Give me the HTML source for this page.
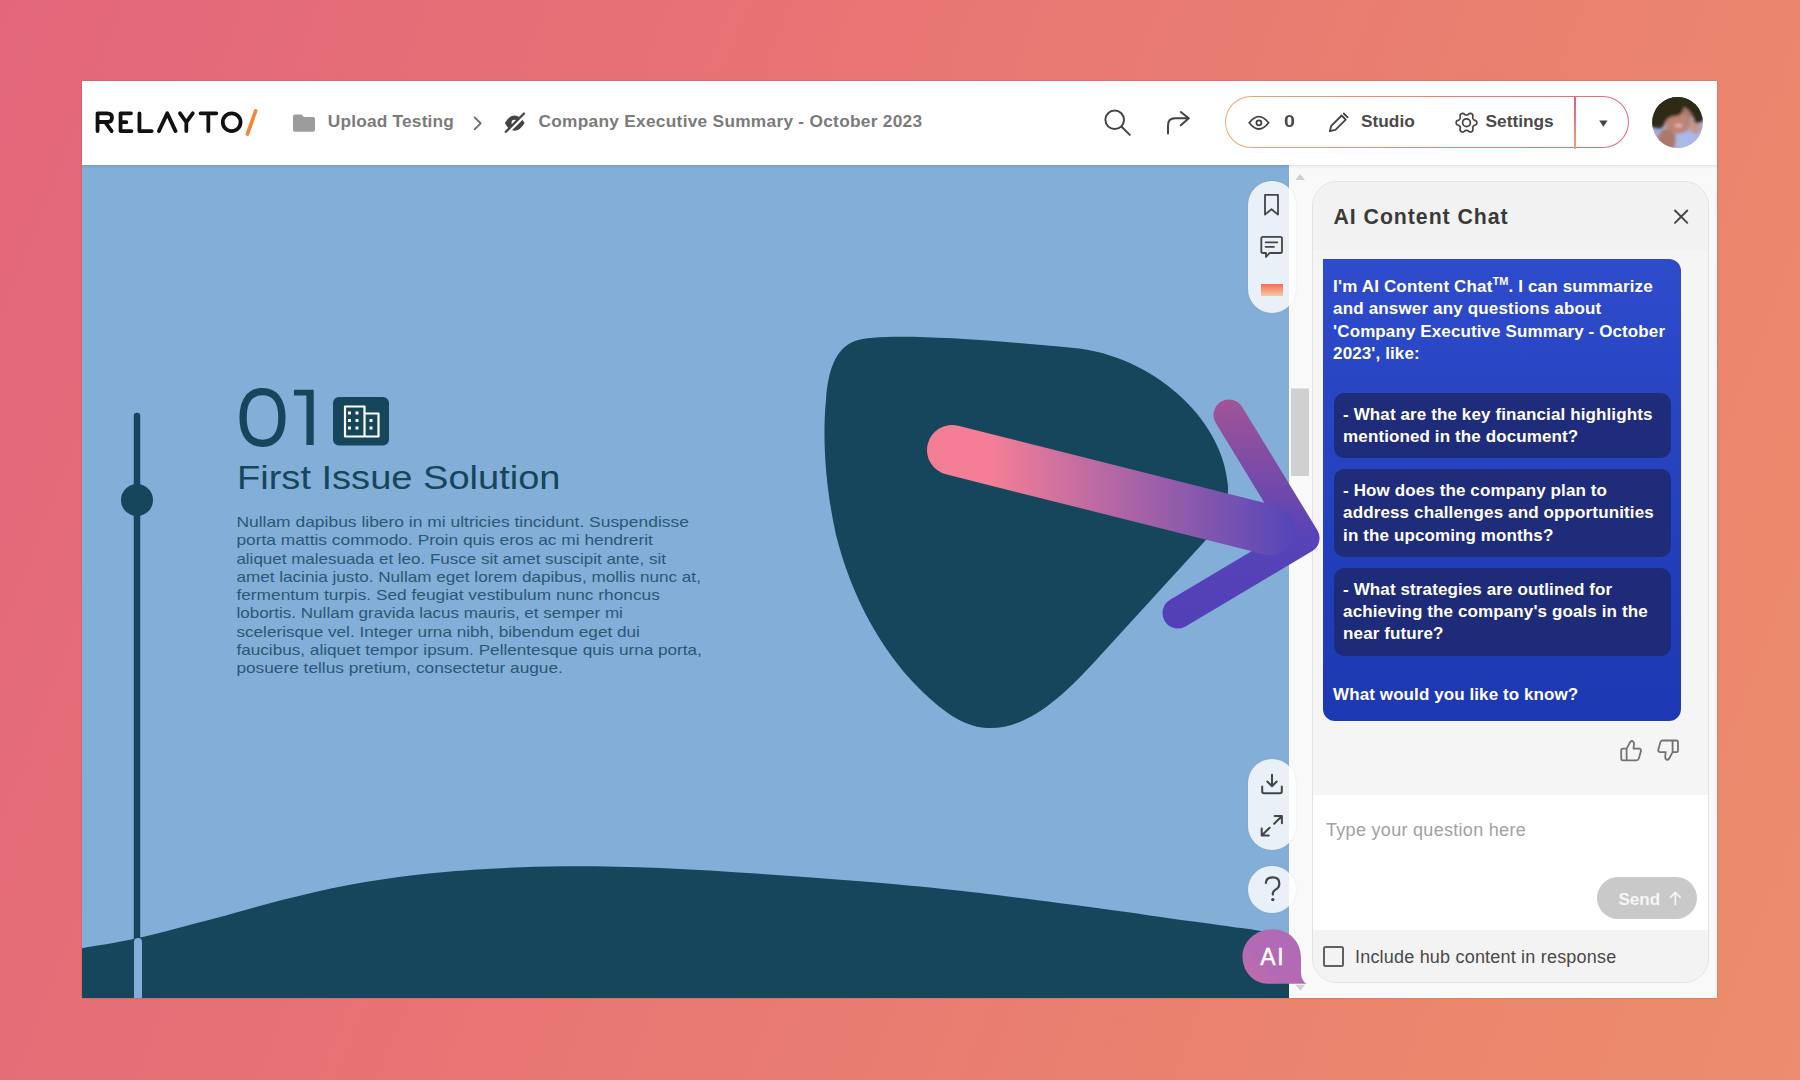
<!DOCTYPE html>
<html><head><meta charset="utf-8">
<style>
*{margin:0;padding:0;box-sizing:border-box}
html,body{width:1800px;height:1080px;overflow:hidden}
body{position:relative;background:linear-gradient(111deg,#E3667A,#ED8D6B);font-family:"Liberation Sans",sans-serif}
.a{position:absolute}
.t{position:absolute;white-space:nowrap;line-height:1}
#hdr{position:absolute;left:82px;top:81px;width:1635px;height:84px;background:#fff}
#rcol{position:absolute;left:1289px;top:165px;width:428px;height:833px;background:#F9F9F9}
#panel{position:absolute;left:1312px;top:181px;width:397px;height:802px;border:1px solid #E2E2E2;border-radius:25px;background:#F4F4F4;overflow:hidden}
</style></head><body>
<div class="a" style="left:82px;top:81px;width:1635px;height:917px;box-shadow:0 0 1.5px rgba(120,20,40,0.35)"></div>
<svg class="a" style="left:0;top:0" width="1800" height="1080" viewBox="0 0 1800 1080">
<defs><clipPath id="sc"><rect x="82" y="165" width="1207" height="833"/></clipPath></defs>
<g clip-path="url(#sc)">
<rect x="82" y="165" width="1207" height="833" fill="#83AED8"/>
<path d="M855,341 C878,333 960,337 1074,348 C1150,355 1223,417 1228,486 C1229,510 1218,527 1204,542 L1098,658 C1060,700 1025,730 987,728 C960,727 935,705 911,680 C875,640 850,590 836,535 C826,490 822,440 826,400 C828,371 835,348.5 855,341Z" fill="#16465C"/>
<line x1="137" y1="416" x2="137" y2="945" stroke="#16465C" stroke-width="6.5" stroke-linecap="round"/>
<circle cx="137" cy="500" r="16" fill="#16465C"/>
<path d="M60.0,953.0 C63.7,952.2 69.2,950.8 82.0,948.3 C94.8,945.8 114.8,943.3 137.0,938.3 C159.2,933.3 191.1,924.7 215.3,918.3 C239.5,911.9 259.8,905.5 282.0,900.0 C304.2,894.5 326.5,889.2 348.7,885.0 C370.9,880.8 393.1,877.6 415.3,875.0 C437.5,872.4 457.1,870.8 482.0,869.3 C506.9,867.8 535.3,866.4 565.0,866.2 C594.7,866.0 627.5,866.7 660.0,868.0 C692.5,869.3 726.7,871.6 760.0,873.8 C793.3,876.0 826.7,878.4 860.0,881.2 C893.3,884.0 920.5,886.3 960.0,890.8 C999.5,895.2 1057.8,902.8 1096.7,907.9 C1135.6,913.0 1166.5,917.9 1193.3,921.6 C1220.1,925.4 1238.3,927.8 1257.8,930.4 C1277.2,933.0 1301.3,936.3 1310.0,937.5 L1310,1000 L60,1000Z" fill="#16465C"/>
<line x1="138" y1="942" x2="138" y2="1010" stroke="#83AED8" stroke-width="8" stroke-linecap="round"/>
<rect x="333" y="397" width="56" height="48.5" rx="6" fill="#16465C"/>
<g fill="none" stroke="#fff" stroke-width="2.2" stroke-linejoin="round">
<path d="M345,436.5 V406.5 H364.5 V436.5 Z M364.5,413.5 H378.5 V436.5 H364.5"/>
</g>
<g fill="#fff">
<rect x="348" y="411.5" width="3" height="3"/><rect x="355.5" y="411.5" width="3" height="3"/>
<rect x="348" y="419" width="3" height="3"/><rect x="355.5" y="419" width="3" height="3"/>
<rect x="348" y="426.5" width="3" height="3"/><rect x="355.5" y="426.5" width="3" height="3"/>
<rect x="369.5" y="419" width="3" height="3"/><rect x="369.5" y="426.5" width="3" height="3"/>
</g>
<path d="M262.5,391.7 C274.92,391.7 281.9,400.99 281.9,417.5 C281.9,434.01 274.92,443.3 262.5,443.3 C250.08,443.3 243.1,434.01 243.1,417.5 C243.1,400.99 250.08,391.7 262.5,391.7Z" fill="none" stroke="#16465C" stroke-width="7.3"/>
<path d="M293.9,389.7 H313.7 V444.9 H306.4 V395.6 H293.9 Z" fill="#16465C"/>
<text x="237" y="488.7" font-size="33.5" fill="#16465C" font-family="Liberation Sans" textLength="323.5" lengthAdjust="spacingAndGlyphs">First Issue Solution</text>
<g font-size="14.6" fill="#2A5874" font-family="Liberation Sans">
<text x="236.4" y="527" textLength="452.5" lengthAdjust="spacingAndGlyphs">Nullam dapibus libero in mi ultricies tincidunt. Suspendisse</text>
<text x="236.4" y="545.25" textLength="416.5" lengthAdjust="spacingAndGlyphs">porta mattis commodo. Proin quis eros ac mi hendrerit</text>
<text x="236.4" y="563.5" textLength="429.5" lengthAdjust="spacingAndGlyphs">aliquet malesuada et leo. Fusce sit amet suscipit ante, sit</text>
<text x="236.4" y="581.75" textLength="464.5" lengthAdjust="spacingAndGlyphs">amet lacinia justo. Nullam eget lorem dapibus, mollis nunc at,</text>
<text x="236.4" y="600" textLength="423.5" lengthAdjust="spacingAndGlyphs">fermentum turpis. Sed feugiat vestibulum nunc rhoncus</text>
<text x="236.4" y="618.25" textLength="386.5" lengthAdjust="spacingAndGlyphs">lobortis. Nullam gravida lacus mauris, et semper mi</text>
<text x="236.4" y="636.5" textLength="403.5" lengthAdjust="spacingAndGlyphs">scelerisque vel. Integer urna nibh, bibendum eget dui</text>
<text x="236.4" y="654.75" textLength="465.5" lengthAdjust="spacingAndGlyphs">faucibus, aliquet tempor ipsum. Pellentesque quis urna porta,</text>
<text x="236.4" y="673" textLength="326.5" lengthAdjust="spacingAndGlyphs">posuere tellus pretium, consectetur augue.</text>
</g>
</g>
</svg>
<div id="hdr"></div>

<svg class="a" style="left:85px;top:95px" width="200" height="55" viewBox="0 0 1800 495">
<g fill="none" stroke="#111" stroke-width="34" stroke-linecap="round" stroke-linejoin="round">
<path d="M113,325 V165 H198 Q243,165 243,204 Q243,243 198,243 H113 M180,243 L240,325"/>
<path d="M414,165 H320 V325 H418 M320,245 H372"/>
<path d="M490,165 V325 H600"/>
<path d="M665,325 L740,165 L815,325"/>
<path d="M855,165 L912,245 L970,165 M912,245 V325"/>
<path d="M1040,165 H1182 M1110,165 V325"/>
<ellipse cx="1320" cy="245" rx="80" ry="80"/>
</g>
<path d="M1536,143 L1462,352" stroke="#F08A3A" stroke-width="33" stroke-linecap="round"/>
</svg>
<svg class="a" style="left:0;top:0" width="1800" height="170" viewBox="0 0 1800 170">
<path d="M293,116.5 a2,2 0 0 1 2,-2 h6.5 l2.5,2.5 h9 a2,2 0 0 1 2,2 v10.8 a2,2 0 0 1 -2,2 h-18 a2,2 0 0 1 -2,-2 z" fill="#9C9C9C"/>
<polyline points="474.6,117.4 480.6,123.3 474.6,129.3" fill="none" stroke="#6E6E6E" stroke-width="1.9" stroke-linecap="round" stroke-linejoin="round"/>
<path d="M504.8,123 Q509,115.5 514.5,115.5 Q520,115.5 524.6,123 Q520,130.8 514.5,130.8 Q509,130.8 504.8,123Z" fill="#444"/>
<circle cx="514.5" cy="122.8" r="3" fill="#fff"/>
<line x1="506" y1="134" x2="526" y2="114" stroke="#fff" stroke-width="3.2"/>
<line x1="505.8" y1="131.8" x2="524" y2="113.5" stroke="#444" stroke-width="2.3" stroke-linecap="round"/>
<g fill="none" stroke="#444" stroke-width="2" stroke-linecap="round" stroke-linejoin="round">
<circle cx="1114.7" cy="119.8" r="9.3"/>
<line x1="1121.6" y1="126.7" x2="1129.8" y2="134.9"/>
<path d="M1168,133.5 V125.5 Q1168,118.3 1175,118.3 H1188.5 M1180.8,112 L1188.8,118.3 L1180.8,125.3"/>
</g>
</svg>
<div class="t" style="left:327.8px;top:113px;font-size:17.3px;font-weight:700;color:#7B7B7B;letter-spacing:0.2px">Upload Testing</div>
<div class="t" style="left:538.5px;top:113px;font-size:17.3px;font-weight:700;color:#7B7B7B;letter-spacing:0.28px">Company Executive Summary - October 2023</div>
<div class="a" style="left:1225.3px;top:96.2px;width:404px;height:52.3px;border-radius:26.2px;background:linear-gradient(82deg,#F4A874 0%,#EF8576 45%,#EB6580 100%)"></div>
<div class="a" style="left:1226.3px;top:97.2px;width:402px;height:50.3px;border-radius:25.2px;background:#fff"></div>
<div class="a" style="left:1574.3px;top:96.5px;width:2px;height:52px;background:linear-gradient(#E85A7C,#F2A26C)"></div>
<svg class="a" style="left:0;top:0" width="1800" height="170" viewBox="0 0 1800 170">
<g fill="none" stroke="#444" stroke-width="1.8" stroke-linecap="round" stroke-linejoin="round">
<path d="M1249.2,122.8 Q1254,116.6 1258.9,116.6 Q1263.8,116.6 1268.6,122.8 Q1263.8,129 1258.9,129 Q1254,129 1249.2,122.8Z"/>
<circle cx="1258.9" cy="122.8" r="2.5"/>
<path d="M1329.8,131.2 L1331.3,125.8 L1341.6,115.5 L1345.7,119.6 L1335.4,129.9 Z"/>
<line x1="1343.8" y1="113.5" x2="1347.6" y2="117.3"/>
</g>
<path d="M1476.85,122.70 L1476.80,123.24 L1476.63,123.77 L1476.36,124.26 L1475.96,124.71 L1475.19,125.03 L1474.42,125.27 L1473.99,125.57 L1473.64,125.88 L1473.35,126.19 L1473.13,126.53 L1472.95,126.89 L1472.82,127.29 L1472.73,127.75 L1472.69,128.28 L1472.86,129.06 L1472.97,129.88 L1472.78,130.46 L1472.49,130.94 L1472.12,131.35 L1471.67,131.66 L1471.18,131.89 L1470.64,132.01 L1470.08,132.02 L1469.49,131.89 L1468.83,131.39 L1468.23,130.85 L1467.75,130.62 L1467.32,130.47 L1466.90,130.38 L1466.50,130.35 L1466.10,130.38 L1465.68,130.47 L1465.25,130.62 L1464.77,130.85 L1464.17,131.39 L1463.51,131.89 L1462.92,132.02 L1462.36,132.01 L1461.82,131.89 L1461.33,131.66 L1460.88,131.35 L1460.51,130.94 L1460.22,130.46 L1460.03,129.88 L1460.14,129.06 L1460.31,128.28 L1460.27,127.75 L1460.18,127.29 L1460.05,126.89 L1459.87,126.53 L1459.65,126.19 L1459.36,125.88 L1459.01,125.57 L1458.58,125.27 L1457.81,125.03 L1457.04,124.71 L1456.64,124.26 L1456.37,123.77 L1456.20,123.24 L1456.15,122.70 L1456.20,122.16 L1456.37,121.63 L1456.64,121.14 L1457.04,120.69 L1457.81,120.37 L1458.58,120.13 L1459.01,119.83 L1459.36,119.52 L1459.65,119.21 L1459.87,118.88 L1460.05,118.51 L1460.18,118.11 L1460.27,117.65 L1460.31,117.12 L1460.14,116.34 L1460.03,115.52 L1460.22,114.94 L1460.51,114.46 L1460.88,114.05 L1461.33,113.74 L1461.82,113.51 L1462.36,113.39 L1462.92,113.38 L1463.51,113.51 L1464.17,114.01 L1464.77,114.55 L1465.25,114.78 L1465.68,114.93 L1466.10,115.02 L1466.50,115.05 L1466.90,115.02 L1467.32,114.93 L1467.75,114.78 L1468.23,114.55 L1468.83,114.01 L1469.49,113.51 L1470.08,113.38 L1470.64,113.39 L1471.18,113.51 L1471.67,113.74 L1472.12,114.05 L1472.49,114.46 L1472.78,114.94 L1472.97,115.52 L1472.86,116.34 L1472.69,117.12 L1472.73,117.65 L1472.82,118.11 L1472.95,118.51 L1473.13,118.88 L1473.35,119.21 L1473.64,119.52 L1473.99,119.83 L1474.42,120.13 L1475.19,120.37 L1475.96,120.69 L1476.36,121.14 L1476.63,121.63 L1476.80,122.16Z" fill="none" stroke="#444" stroke-width="1.7" stroke-linejoin="round"/>
<circle cx="1466.5" cy="122.7" r="3.9" fill="none" stroke="#444" stroke-width="1.7"/>
<path d="M1599.2,120.6 H1607.6 L1603.4,126.8Z" fill="#444"/>
</svg>
<div class="t" style="left:1283.6px;top:113.2px;font-size:17.3px;font-weight:700;color:#4A4A4A;transform:scaleX(1.14);transform-origin:0 0">0</div>
<div class="t" style="left:1361px;top:113.2px;font-size:17.3px;font-weight:700;color:#4A4A4A">Studio</div>
<div class="t" style="left:1485.5px;top:113px;font-size:17.3px;font-weight:700;color:#4A4A4A">Settings</div>
<svg class="a" style="left:1651.9px;top:96.9px" width="51" height="51" viewBox="0 0 51 51">
<defs><clipPath id="av"><circle cx="25.5" cy="25.5" r="25.4"/></clipPath>
<filter id="bl" x="-20%" y="-20%" width="140%" height="140%"><feGaussianBlur stdDeviation="1.6"/></filter></defs>
<g clip-path="url(#av)">
<rect width="51" height="51" fill="#A5ABDB"/><rect x="0" y="0" width="51" height="14" fill="#2E2914"/>
<g filter="url(#bl)">
<ellipse cx="35" cy="44" rx="13" ry="9" fill="#ABB9E8"/>
<ellipse cx="15" cy="43" rx="9" ry="11" fill="#AE7868"/>
<ellipse cx="43" cy="29" rx="5" ry="8" fill="#C49888"/>
<ellipse cx="32" cy="17" rx="8" ry="9" fill="#A87A66"/><ellipse cx="26" cy="26" rx="12.5" ry="10.5" fill="#BC8472"/>
<path d="M-3,30 L-3,-5 L54,-5 L54,20 Q50,27 43,26 Q40,14 32,10 Q30,19 24,19 Q15,19 12,28 Q9,33 5,31 Q0,30 -3,30Z" fill="#2E2914"/>
<ellipse cx="26.5" cy="28.5" rx="4" ry="1.8" fill="#E6B4B4"/>
</g>
</g>
</svg>

<div id="rcol"></div>
<svg class="a" style="left:1289px;top:165px" width="23" height="833" viewBox="1289 165 23 833">
<path d="M1295.3,180 L1300.2,174 L1305.1,180Z" fill="#D0D0D0"/>
<rect x="1291" y="388.5" width="18" height="87.5" fill="#D0D0D0"/>
<path d="M1295.3,984.8 L1300.3,990.4 L1305.3,984.8Z" fill="#D0D0D0"/>
</svg>
<div style="position:absolute;left:82px;top:165px;width:1635px;height:4px;background:linear-gradient(rgba(0,0,0,0.10),rgba(0,0,0,0.035) 40%,rgba(0,0,0,0))"></div>
<div id="panel">
<div class="a" style="left:0;top:0;width:395px;height:68px;background:#F2F2F2"></div>
<div class="a" style="left:0;top:68px;width:395px;height:545px;background:#F5F5F5"></div>
<div class="a" style="left:0;top:613px;width:395px;height:135px;background:#fff"></div>
<div class="a" style="left:0;top:748px;width:395px;height:60px;background:#F3F3F3"></div>
</div>
<div class="a" style="left:1323px;top:259px;width:358px;height:462px;border-radius:0 12px 12px 12px;background:linear-gradient(#2D4BCB,#1C38B2)"></div>
<div class="a" style="left:1334px;top:393px;width:337px;height:65px;border-radius:10px;background:#1F2C7C"></div>
<div class="a" style="left:1334px;top:469px;width:337px;height:88px;border-radius:10px;background:#1F2C7A"></div>
<div class="a" style="left:1334px;top:568px;width:337px;height:88px;border-radius:10px;background:#1E2B78"></div>
<div class="a" style="left:1596.6px;top:877px;width:100.4px;height:42px;border-radius:21px;background:#C9C9C9"></div>
<div class="a" style="left:1323px;top:946px;width:21px;height:20.5px;border:2px solid #606060;border-radius:2.5px"></div>
<svg class="a" style="left:0;top:0" width="1800" height="1080" viewBox="0 0 1800 1080" pointer-events="none">
<g fill="none" stroke="#444" stroke-width="1.9" stroke-linecap="round">
<path d="M1675,210.5 L1687.3,222.8 M1687.3,210.5 L1675,222.8"/>
</g>
<g fill="none" stroke="#737373" stroke-width="1.8" stroke-linejoin="round" stroke-linecap="round">
<path id="thu" d="M1626.6,748.7 H1622.8 Q1621.2,748.7 1621.2,750.3 V758.6 Q1621.2,760.3 1622.8,760.3 H1626.6 Z M1626.6,748.7 L1630,742.3 Q1631,740.5 1632.7,741.2 Q1634.3,742 1634,744.6 L1633.5,748.7 H1639.4 Q1641.3,749.1 1640.9,751.3 L1638.8,758.5 Q1638.2,760.3 1636.5,760.3 H1626.6"/>
<path transform="matrix(-1,0,0,-1,3299.2,1500.8)" d="M1626.6,748.7 H1622.8 Q1621.2,748.7 1621.2,750.3 V758.6 Q1621.2,760.3 1622.8,760.3 H1626.6 Z M1626.6,748.7 L1630,742.3 Q1631,740.5 1632.7,741.2 Q1634.3,742 1634,744.6 L1633.5,748.7 H1639.4 Q1641.3,749.1 1640.9,751.3 L1638.8,758.5 Q1638.2,760.3 1636.5,760.3 H1626.6"/>
</g>
<g fill="none" stroke="#F6F6F6" stroke-width="1.6" stroke-linecap="round" stroke-linejoin="round">
<path d="M1675.3,904.8 V892.6 M1670.4,897.4 L1675.3,892.4 L1680.2,897.4"/>
</g>
</svg>
<div class="t" style="left:1333.5px;top:207.3px;font-size:21.3px;font-weight:700;color:#3A3A3A;letter-spacing:0.95px;">AI Content Chat</div>
<div class="t" style="left:1333.1px;top:278.41px;font-size:17px;font-weight:700;color:#fff;letter-spacing:0.16px;">I'm AI Content Chat<span style="font-size:11px;position:relative;top:-7px;letter-spacing:0">TM</span>. I can summarize</div>
<div class="t" style="left:1333.1px;top:300.41px;font-size:17px;font-weight:700;color:#fff;letter-spacing:0.16px;">and answer any questions about</div>
<div class="t" style="left:1333.1px;top:322.61px;font-size:17px;font-weight:700;color:#fff;letter-spacing:0.11px;">'Company Executive Summary - October</div>
<div class="t" style="left:1333.1px;top:344.81px;font-size:17px;font-weight:700;color:#fff;letter-spacing:0.11px;">2023', like:</div>
<div class="t" style="left:1343.1px;top:406.21px;font-size:17px;font-weight:700;color:#fff;letter-spacing:0.11px;">- What are the key financial highlights</div>
<div class="t" style="left:1343.1px;top:428.31px;font-size:17px;font-weight:700;color:#fff;letter-spacing:0.11px;">mentioned in the document?</div>
<div class="t" style="left:1343.1px;top:482.31px;font-size:17px;font-weight:700;color:#fff;letter-spacing:0.11px;">- How does the company plan to</div>
<div class="t" style="left:1343.1px;top:504.41px;font-size:17px;font-weight:700;color:#fff;letter-spacing:0.13px;">address challenges and opportunities</div>
<div class="t" style="left:1343.1px;top:526.51px;font-size:17px;font-weight:700;color:#fff;letter-spacing:0.11px;">in the upcoming months?</div>
<div class="t" style="left:1343.1px;top:580.61px;font-size:17px;font-weight:700;color:#fff;letter-spacing:0.11px;">- What strategies are outlined for</div>
<div class="t" style="left:1343.1px;top:602.71px;font-size:17px;font-weight:700;color:#fff;letter-spacing:0.11px;">achieving the company's goals in the</div>
<div class="t" style="left:1343.1px;top:624.81px;font-size:17px;font-weight:700;color:#fff;letter-spacing:0.11px;">near future?</div>
<div class="t" style="left:1333.1px;top:685.91px;font-size:17px;font-weight:700;color:#fff;letter-spacing:0.09px;">What would you like to know?</div>
<div class="t" style="left:1326px;top:821.36px;font-size:18px;font-weight:400;color:#A2A2A2;letter-spacing:0.3px;">Type your question here</div>
<div class="t" style="left:1618.5px;top:891px;font-size:17px;font-weight:700;color:#F6F6F6;letter-spacing:0px;">Send</div>
<div class="t" style="left:1355px;top:947.76px;font-size:18px;font-weight:400;color:#484848;letter-spacing:0.2px;">Include hub content in response</div>


<div class="a" style="left:1248px;top:181px;width:47.5px;height:132px;border-radius:24px;background:rgba(255,255,255,0.82);box-shadow:0 0 1.5px rgba(0,0,0,0.12)"></div>
<div class="a" style="left:1248px;top:759.3px;width:47.5px;height:90.5px;border-radius:24px;background:rgba(255,255,255,0.82);box-shadow:0 0 1.5px rgba(0,0,0,0.12)"></div>
<div class="a" style="left:1248px;top:865.8px;width:47.5px;height:47.5px;border-radius:24px;background:rgba(255,255,255,0.82);box-shadow:0 0 1.5px rgba(0,0,0,0.12)"></div>
<div class="a" style="left:1260.8px;top:284px;width:22.5px;height:11.7px;background:linear-gradient(#F96A52,#F7C9A4)"></div>
<svg class="a" style="left:0;top:0" width="1800" height="1080" viewBox="0 0 1800 1080">
<defs>
<linearGradient id="aig" x1="1245" y1="983" x2="1300" y2="930" gradientUnits="userSpaceOnUse"><stop offset="0" stop-color="#C46DA8"/><stop offset="0.35" stop-color="#B36AB4"/><stop offset="1" stop-color="#AF6AB6"/></linearGradient>
<linearGradient id="sh" x1="927" y1="0" x2="1295" y2="0" gradientUnits="userSpaceOnUse"><stop offset="0" stop-color="#F47E96"/><stop offset="0.17" stop-color="#F47E96"/><stop offset="1" stop-color="#5446B8"/></linearGradient>
<linearGradient id="hd" x1="0" y1="400" x2="0" y2="628" gradientUnits="userSpaceOnUse"><stop offset="0" stop-color="#A05496"/><stop offset="0.6" stop-color="#5843B7"/><stop offset="1" stop-color="#5240B8"/></linearGradient>
</defs>
<g fill="none" stroke="#444" stroke-width="1.8" stroke-linecap="round" stroke-linejoin="round">
<path d="M1265,194.8 H1278 V214.6 L1271.5,209.2 L1265,214.6Z"/>
<path d="M1263,236.8 H1280.3 Q1282,236.8 1282,238.5 V251.3 Q1282,253 1280.3,253 H1269.5 L1266,257 V253 H1263 Q1261.3,253 1261.3,251.3 V238.5 Q1261.3,236.8 1263,236.8Z"/>
<path d="M1265.6,242.3 H1277.3 M1265.6,246.8 H1274"/>
<path d="M1272,774.8 V786 M1267.3,781.5 L1272,786.2 L1276.7,781.5 M1262.2,786.6 V791.5 Q1262.2,793.3 1264,793.3 H1280 Q1281.8,793.3 1281.8,791.5 V786.6" stroke-width="2"/>
<path d="M1261.7,828.5 V835.6 H1268.8 M1262,835.3 L1269.6,827.7 M1274.6,816 H1281.9 V823.2 M1281.6,816.3 L1274.2,823.7" stroke-width="2"/>
<path d="M1265.9,883 Q1266.2,877.4 1272.8,877.4 Q1279.3,877.4 1279.3,883.4 Q1279.3,887.6 1275.6,889.6 Q1272.8,891.2 1272.8,893.8 V894.6" stroke-width="2.2"/>
</g>
<circle cx="1272.8" cy="899.6" r="1.7" fill="#444"/>
<path d="M1272.3,929.3 C1289,929.3 1301,941.5 1301,958 V971.5 Q1301,980.5 1306.4,983.7 H1268 C1253.5,983.7 1242.5,971.5 1242.5,956.5 C1242.5,941.5 1256,929.3 1272.3,929.3Z" fill="url(#aig)"/>
<text x="1260.3" y="964.8" font-size="23" fill="#fff" stroke="#fff" stroke-width="0.45" font-family="Liberation Sans" letter-spacing="1.6">AI</text>
<polyline points="1229,415 1304,538 1178,613" fill="none" stroke="url(#hd)" stroke-width="31" stroke-linecap="round" stroke-linejoin="round"/>
<line x1="952" y1="450" x2="1270" y2="530" stroke="url(#sh)" stroke-width="50" stroke-linecap="round"/>
</svg>
</body></html>
